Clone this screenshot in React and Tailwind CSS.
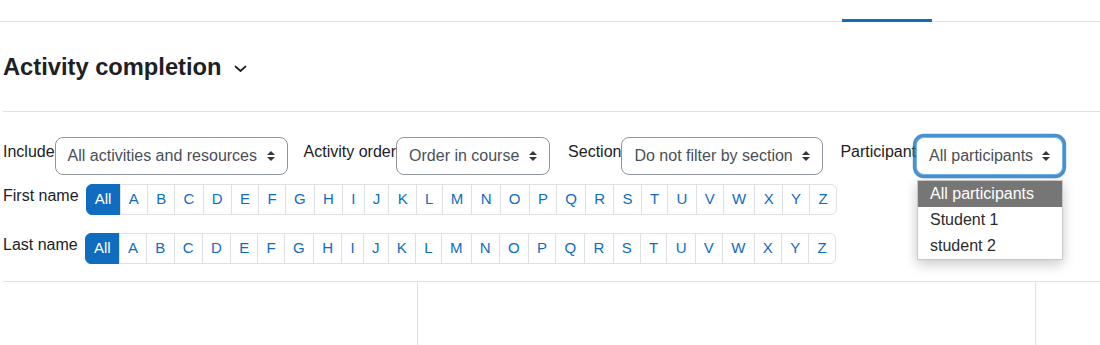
import React from "react";

const letters = "ABCDEFGHIJKLMNOPQRSTUVWXYZ".split("");

function SortArrow() {
  return (
    <svg width="8" height="10" viewBox="0 0 4 5" className="shrink-0">
      <path d="M2 0L0 2h4zm0 5L0 3h4z" fill="#343a40" />
    </svg>
  );
}

function Select({ text, width, focus }) {
  return (
    <div
      className={
        "h-[38px] flex items-center justify-between pl-[12px] pr-[12px] rounded-[8px] border bg-white text-[16px] leading-[24px] text-[#495057] whitespace-nowrap " +
        (focus
          ? "border-[#73b2ea] shadow-[0_0_0_3.2px_rgba(15,108,191,0.75)]"
          : "border-[#8f959e]")
      }
      style={{ width }}
    >
      <span>{text}</span>
      <SortArrow />
    </div>
  );
}

function InitialsBar() {
  return (
    <div className="flex h-[31px] text-[15px] leading-[22.5px]">
      <div className="h-full px-[8.2px] flex items-center bg-[#0f6cbf] border border-[#0f6cbf] text-white rounded-l-[6px]">
        All
      </div>
      {letters.map((l, i) => (
        <div
          key={l}
          className={
            "h-full px-[8.2px] flex items-center -ml-px border border-[#dee2e6] text-[#0f6cbf] bg-white " +
            (i === letters.length - 1 ? "rounded-r-[6px]" : "")
          }
        >
          {l}
        </div>
      ))}
    </div>
  );
}

export default function App() {
  return (
    <div className="relative w-[1100px] h-[345px] overflow-hidden bg-white text-[#1d2125] font-['Liberation_Sans',Arial,sans-serif]">
      {/* tab bar */}
      <div className="h-[22px] flex border-b border-[#dee2e6]">
        <div className="ml-[842px] w-[90px] h-[3px] self-end -mb-px bg-[#0f6cbf]" />
      </div>

      <div className="pl-[3px]">
        {/* heading */}
        <div className="mt-[31px] pb-[29px] border-b border-[#dee2e6] flex items-center">
          <h2 className="text-[23.7px] leading-[29px] font-bold text-[#1d2125]">
            Activity completion
          </h2>
          <svg width="13" height="8" viewBox="0 0 13 8" className="ml-[12px] mt-[3px]">
            <polyline
              points="1.5,1.5 6.5,6 11.5,1.5"
              fill="none"
              stroke="#1d2125"
              strokeWidth="1.7"
              strokeLinecap="round"
              strokeLinejoin="round"
            />
          </svg>
        </div>

        {/* filter row */}
        <div className="mt-[25px] flex items-start text-[16px] leading-[24px]">
          <label className="mt-[3px]">Include</label>
          <Select text="All activities and resources" width={233} />
          <label className="mt-[3px] ml-[16px]">Activity order</label>
          <Select text="Order in course" width={154} />
          <label className="mt-[3px] ml-[18px]">Section</label>
          <Select text="Do not filter by section" width={202} />
          <label className="mt-[3px] ml-[17px]">Participant</label>
          <Select text="All participants" width={147} focus />
        </div>

        {/* initials */}
        <div className="mt-[9px] flex items-start text-[16px] leading-[24px]">
          <span className="mr-[7px]">First name</span>
          <InitialsBar />
        </div>
        <div className="mt-[18px] flex items-start text-[16px] leading-[24px]">
          <span className="mr-[7px]">Last name</span>
          <InitialsBar />
        </div>

        {/* table header */}
        <div className="mt-[17px] flex h-[70px] border-t border-[#dee2e6]">
          <div className="w-[414px]" />
          <div className="w-[618px] border-l border-[#dee2e6]" />
          <div className="flex-1 border-l border-[#dee2e6]" />
        </div>
      </div>

      {/* open native dropdown */}
      <div className="absolute left-[917px] top-[180px] w-[146px] bg-white border border-[#c8c8c8] shadow-[0_4px_12px_rgba(0,0,0,0.22)] text-[16px] leading-[26px]">
        <div className="h-[26px] pl-[12px] bg-[#767676] text-white">All participants</div>
        <div className="h-[26px] pl-[12px] text-[#2b2b2b]">Student 1</div>
        <div className="h-[26px] pl-[12px] text-[#2b2b2b]">student 2</div>
      </div>
    </div>
  );
}
